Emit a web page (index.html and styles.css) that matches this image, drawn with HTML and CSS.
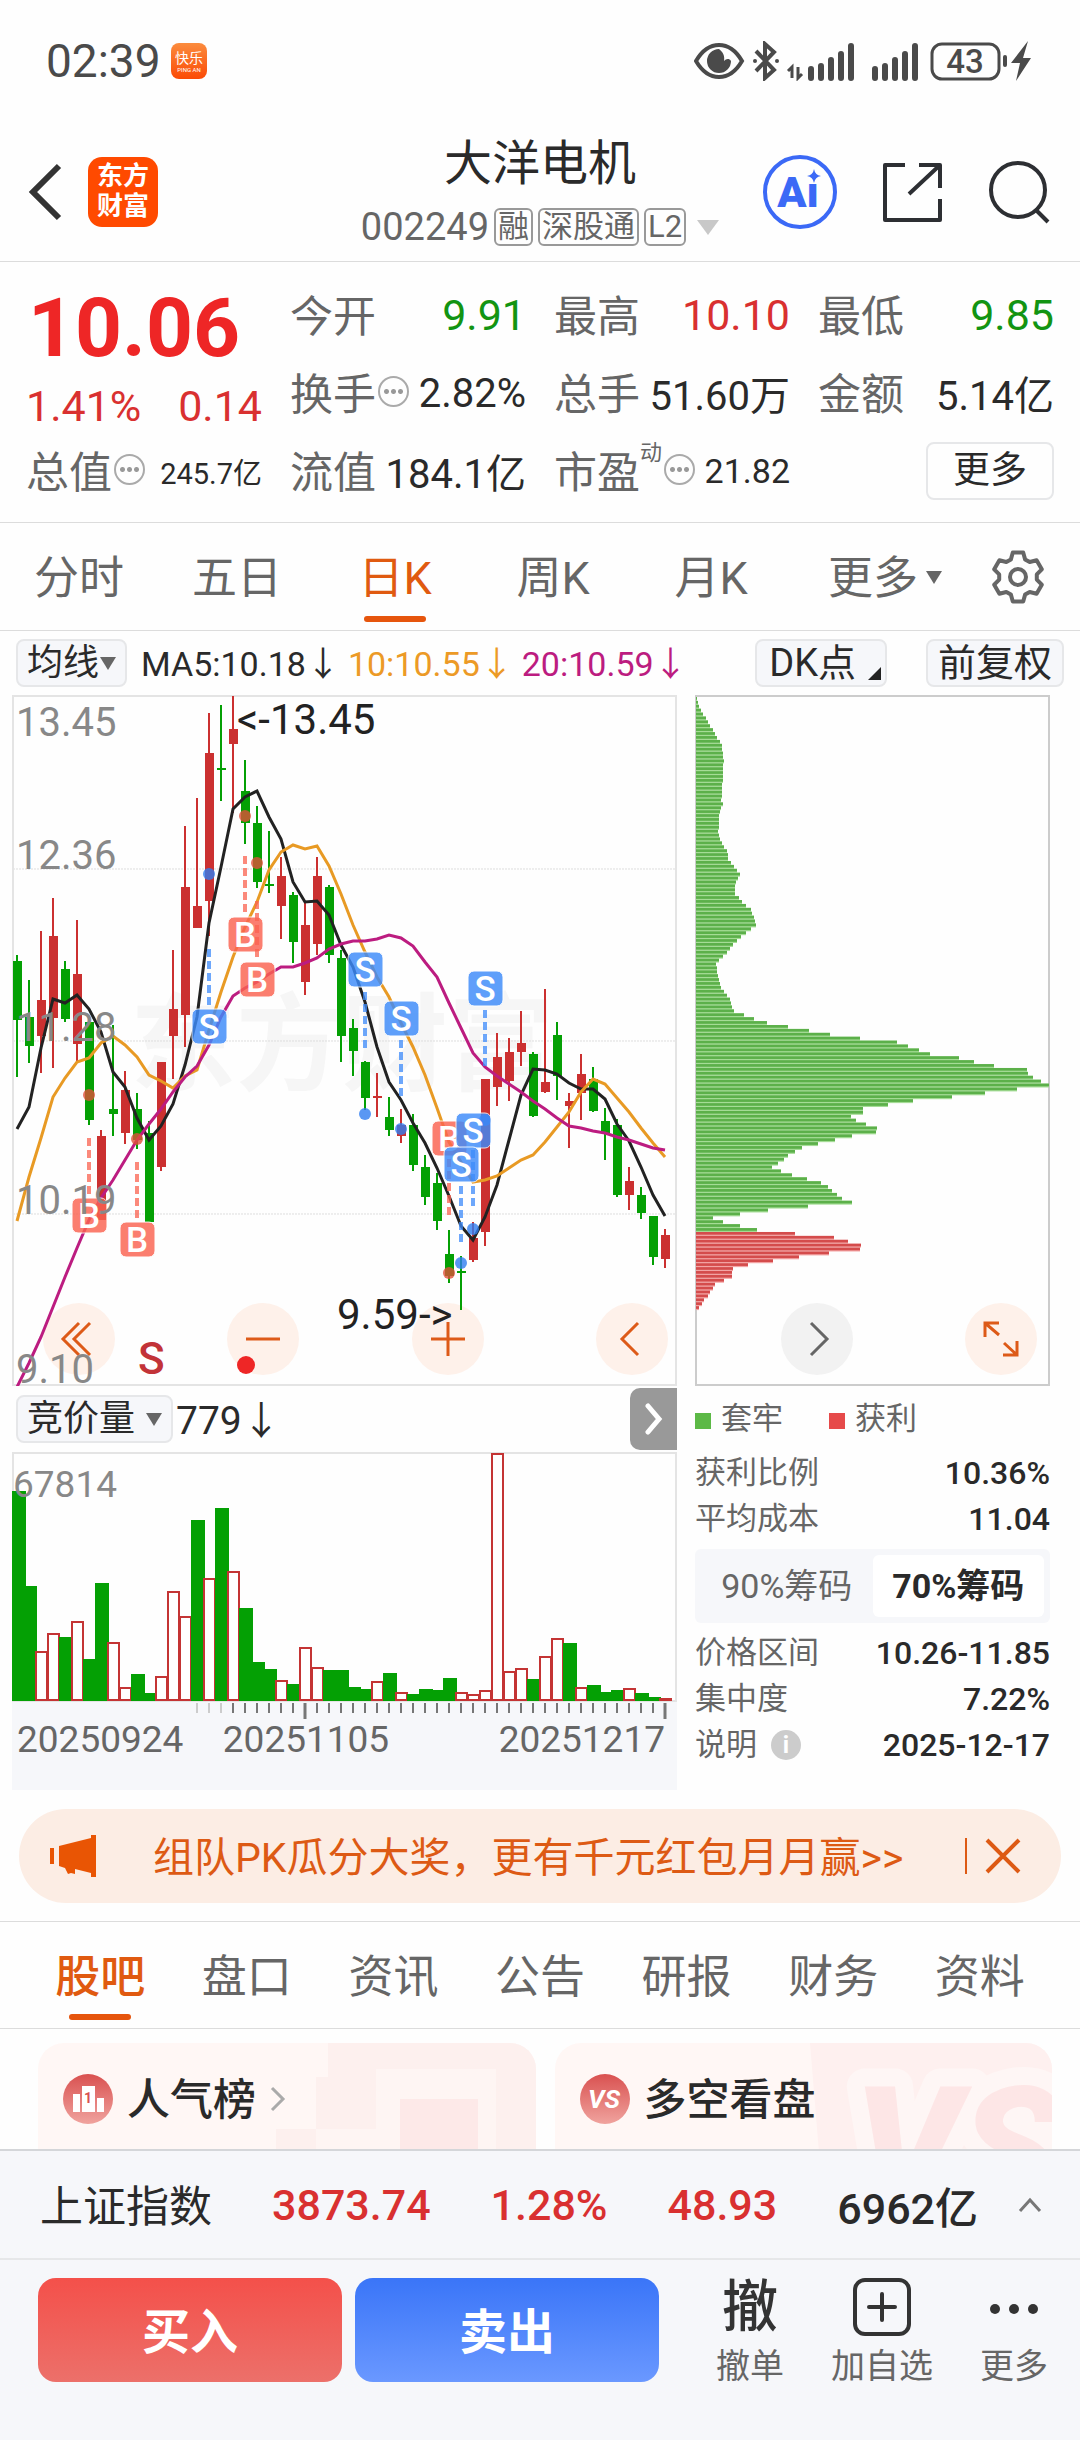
FILE: index.html
```
<!DOCTYPE html>
<html lang="zh-CN">
  <head>
    <meta charset="UTF-8" />
    <meta name="viewport" content="width=device-width, initial-scale=1.0" />
    <title>大洋电机 002249</title>
    <link rel="stylesheet" href="styles.css" />
  </head>

  <body>
    <main class="page">
      <div class="status-bar">
        <span class="clock">02:39</span>
        <svg class="app-badge" width="36" height="36" viewBox="0 0 36 36">
          <defs>
            <linearGradient id="badgeFill" x1="0" y1="0" x2="0" y2="1">
              <stop offset="0" stop-color="#fb8c3e" />
              <stop offset="1" stop-color="#fb4a05" />
            </linearGradient>
          </defs>
          <rect width="36" height="36" rx="8" fill="url(#badgeFill)" />
          <text x="18" y="20" font-size="14" text-anchor="middle" fill="#fff">快乐</text>
          <text x="18" y="29" font-size="6" text-anchor="middle" fill="#fff">PING AN</text>
        </svg>
        <svg class="status-icons" width="340" height="40" viewBox="0 0 340 40">
          <g fill="#4a4a4a">
            <path d="M2 20C9 8 17 4 25 4s16 4 23 16c-7 12-15 16-23 16S9 32 2 20z" fill="none" stroke="#4a4a4a" stroke-width="4" />
            <path d="M25 8a12 12 0 1 0 12 12c-2-3-5-2-7 0 1-5-1-9-5-12z" />
            <path d="M62 10l18 19-9 8V3l9 8-18 19" fill="none" stroke="#4a4a4a" stroke-width="4" />
            <circle cx="61" cy="20" r="2" />
            <circle cx="83" cy="20" r="2" />
            <path d="M98 37V26l-4 4M104 26v11l4-4" fill="none" stroke="#4a4a4a" stroke-width="3" />
            <path d="M117 37V28M127 37V25M137 37V19M147 37V13M157 37V5" stroke="#4a4a4a" stroke-width="6" stroke-linecap="round" />
            <path d="M181 37V28M191 37V25M201 37V19M211 37V13M221 37V5" stroke="#4a4a4a" stroke-width="6" stroke-linecap="round" />
            <rect x="238" y="3" width="67" height="35" rx="10" fill="none" stroke="#4a4a4a" stroke-width="3" />
            <rect x="309" y="14" width="4" height="12" rx="2" />
            <path d="M334 0l-17 22h9l-4 18 15-23h-8z" />
          </g>
          <text x="271" y="32" font-size="33" font-weight="500" text-anchor="middle" fill="#4a4a4a">43</text>
        </svg>
      </div>

      <header class="stock-header">
        <div class="header-left">
          <button class="icon-button" aria-label="返回">
            <svg width="36" height="60" viewBox="0 0 36 60">
              <path d="M31 4L5 30l26 26" fill="none" stroke="#333" stroke-width="6" />
            </svg>
          </button>
          <a class="brand" href="#">东方<br />财富</a>
        </div>
        <div class="stock-title">
          <h1>大洋电机</h1>
          <p class="stock-code">
            002249 <span class="tag">融</span><span class="tag">深股通</span><span class="tag">L2</span>
            <i class="triangle light"></i>
          </p>
        </div>
        <div class="header-right">
          <button class="icon-button" aria-label="AI">
            <svg width="76" height="76" viewBox="0 0 76 76">
              <circle cx="38" cy="38" r="35" fill="none" stroke="#3b69f6" stroke-width="4" />
              <text x="36" y="53" font-size="43" font-weight="900" text-anchor="middle" fill="#3b69f6">Aı</text>
              <path d="M52 15q1 6 7 7-6 1-7 7-1-6-7-7 6-1 7-7z" fill="#3b69f6" />
            </svg>
          </button>
          <button class="icon-button" aria-label="分享">
            <svg width="62" height="62" viewBox="0 0 62 62">
              <path d="M23 4H3v55h55V38M37 4h21v23M58 4L27 33" fill="none" stroke="#2d2f33" stroke-width="4" stroke-linejoin="round" />
            </svg>
          </button>
          <button class="icon-button" aria-label="搜索">
            <svg width="64" height="64" viewBox="0 0 64 64">
              <circle cx="30" cy="30" r="27" fill="none" stroke="#2d2f33" stroke-width="4" />
              <path d="M48 50l12 12" stroke="#2d2f33" stroke-width="4" />
            </svg>
          </button>
        </div>
      </header>

      <section class="quote">
        <div class="price-cell">
          <strong class="price">10.06</strong>
          <div class="change up"><span>1.41%</span><span>0.14</span></div>
        </div>
        <div class="cell"><span>今开</span><b class="down">9.91</b></div>
        <div class="cell"><span>最高</span><b class="up">10.10</b></div>
        <div class="cell"><span>最低</span><b class="down">9.85</b></div>
        <div class="cell"><span>换手<i class="hint"></i></span><b class="mid">2.82%</b></div>
        <div class="cell"><span>总手</span><b class="mid">51.60万</b></div>
        <div class="cell"><span>金额</span><b class="mid">5.14亿</b></div>
        <div class="cell"><span>总值<i class="hint"></i></span><b class="small">245.7亿</b></div>
        <div class="cell"><span>流值</span><b class="mid">184.1亿</b></div>
        <div class="cell"><span>市盈<sup>动</sup><i class="hint"></i></span><b class="medium">21.82</b></div>
        <div class="cell end"><button class="more-button">更多</button></div>
      </section>

      <nav class="tabs period-tabs">
        <button>分时</button>
        <button>五日</button>
        <button class="active">日K</button>
        <button>周K</button>
        <button>月K</button>
        <button class="wide">更多<i class="triangle tiny"></i></button>
        <button class="gear" aria-label="设置">
          <svg width="54" height="54" viewBox="-27 -27 54 54">
            <g fill="none" stroke="#666" stroke-width="4" stroke-linejoin="round">
              <path d="M-7.1-17.6L-5.2-24.5H5.2L7.1-17.6 11.7-15 18.6-16.7 23.8-7.7 18.8-2.6V2.6L23.8 7.7 18.6 16.7 11.7 15 7.1 17.6 5.2 24.5H-5.2L-7.1 17.6-11.7 15-18.6 16.7-23.8 7.7-18.8 2.6V-2.6L-23.8-7.7-18.6-16.7-11.7-15z" />
              <circle r="8" />
            </g>
          </svg>
        </button>
      </nav>

      <div class="toolbar">
        <label class="chip">
          <select aria-label="指标"><option>均线</option></select>
          <i class="triangle"></i>
        </label>
        <span class="ma ma5">MA5:10.18↓</span>
        <span class="ma ma10">10:10.55↓</span>
        <span class="ma ma20">20:10.59↓</span>
        <button class="chip dk">DK点</button>
        <button class="chip adjust">前复权</button>
      </div>

      <section class="charts">
        <div class="chart-column">
          <div class="kline">
            <div class="chart-tools">
              <button class="round" aria-label="最早">
                <svg width="40" height="40" viewBox="0 0 40 40"><path d="M20 4L4 20l16 16M31 4L15 20l16 16" /></svg>
              </button>
              <button class="round" aria-label="缩小">
                <svg width="40" height="40" viewBox="0 0 40 40"><path d="M3 20h34" /></svg>
              </button>
              <button class="round" aria-label="放大">
                <svg width="40" height="40" viewBox="0 0 40 40"><path d="M3 20h34M20 3v34" /></svg>
              </button>
              <button class="round" aria-label="向左">
                <svg width="40" height="40" viewBox="0 0 40 40"><path d="M26 4L10 20l16 16" /></svg>
              </button>
            </div>
            <svg id="kline" class="plot" viewBox="0 0 665 691"></svg>
          </div>
          <div class="sub-toolbar">
            <label class="chip">
              <select aria-label="副图指标"><option>竞价量</option></select>
              <i class="triangle"></i>
            </label>
            <span class="volume-value">779↓</span>
            <button class="next" aria-label="展开">
              <svg width="20" height="32" viewBox="0 0 20 32"><path d="M4 3l11 13L4 29" /></svg>
            </button>
          </div>
          <svg id="volume" class="plot" viewBox="0 0 665 250"></svg>
          <div class="axis">
            <svg id="ticks" class="plot" viewBox="0 0 665 18"></svg>
            <div class="dates"><span>20250924</span><span>20251105</span><span>20251217</span></div>
          </div>
        </div>

        <div class="chips-column">
          <div class="profile">
            <svg id="profile" class="plot" viewBox="0 0 355 691"></svg>
            <div class="profile-tools">
              <button class="round gray" aria-label="向右">
                <svg width="40" height="40" viewBox="0 0 40 40"><path d="M14 4l16 16-16 16" /></svg>
              </button>
              <button class="round" aria-label="全屏">
                <svg width="40" height="40" viewBox="0 0 40 40"><path d="M18 4H4v14M4 4l14 12M22 36h14V22M36 36L23 24" /></svg>
              </button>
            </div>
          </div>
          <div class="legend"><span class="trapped">套牢</span><span class="profit">获利</span></div>
          <dl class="facts">
            <div><dt>获利比例</dt><dd>10.36%</dd></div>
            <div><dt>平均成本</dt><dd>11.04</dd></div>
          </dl>
          <div class="toggle">
            <button>90%筹码</button>
            <button class="active">70%筹码</button>
          </div>
          <dl class="facts">
            <div><dt>价格区间</dt><dd>10.26-11.85</dd></div>
            <div><dt>集中度</dt><dd>7.22%</dd></div>
            <div><dt>说明<i class="info">i</i></dt><dd>2025-12-17</dd></div>
          </dl>
        </div>
      </section>

      <div class="banner">
        <svg width="50" height="44" viewBox="0 0 50 44">
          <path d="M1 14h4v16H1zM10 12L42 4V1h5v42h-5v-4l-16-4v5l-4-1-3 1-3-6-6-2z" fill="#e95504" />
        </svg>
        <a href="#">组队PK瓜分大奖，更有千元红包月月赢&gt;&gt;</a>
        <button class="close" aria-label="关闭">
          <svg width="36" height="36" viewBox="0 0 36 36"><path d="M2 2l32 32M34 2L2 34" /></svg>
        </button>
      </div>

      <nav class="tabs info-tabs">
        <button class="active">股吧</button>
        <button>盘口</button>
        <button>资讯</button>
        <button>公告</button>
        <button>研报</button>
        <button>财务</button>
        <button>资料</button>
      </nav>

      <section class="cards">
        <a class="card" href="#">
          <svg class="card-art" width="260" height="170" viewBox="0 0 260 170">
            <path d="M52 0h208v170H0V86h40V34h12z" fill="#fdf0ee" />
            <path d="M100 26h120v144H40V86h60z" fill="#fef5f3" />
            <path d="M124 56h78v114h-78z" fill="#fde9e8" />
          </svg>
          <svg width="50" height="50" viewBox="0 0 50 50">
            <defs>
              <linearGradient id="redFill" x1="0" y1="0" x2="0" y2="1">
                <stop offset="0" stop-color="#d95150" />
                <stop offset="1" stop-color="#f0a39e" />
              </linearGradient>
            </defs>
            <circle cx="25" cy="25" r="25" fill="url(#redFill)" />
            <path d="M10 20h7v18h-7zM19 12h13v26H19zM34 24h7v14h-7z" fill="#fff" />
            <text x="25" y="29" font-size="14" font-weight="700" text-anchor="middle" fill="#d95150">1</text>
          </svg>
          <span>人气榜</span>
          <svg width="16" height="26" viewBox="0 0 16 26"><path d="M2 2l11 11L2 24" fill="none" stroke="#aaa" stroke-width="3" /></svg>
        </a>
        <a class="card" href="#">
          <svg class="card-art" width="242" height="170" viewBox="0 0 242 170">
            <path d="M0 0h242v170H14z" fill="#fef0ef" />
            <text x="44" y="162" font-size="166" font-weight="900" font-style="italic" fill="#fde6e6" stroke="#fef6f5" stroke-width="36" stroke-linejoin="round" paint-order="stroke">VS</text>
          </svg>
          <svg width="50" height="50" viewBox="0 0 50 50">
            <circle cx="25" cy="25" r="25" fill="url(#redFill)" />
            <text x="24" y="34" font-size="26" font-weight="700" font-style="italic" text-anchor="middle" fill="#fff">VS</text>
          </svg>
          <span>多空看盘</span>
        </a>
      </section>
    </main>

    <footer class="bottom">
      <div class="index-row">
        <span>上证指数</span>
        <b class="up">3873.74</b>
        <b class="up">1.28%</b>
        <b class="up">48.93</b>
        <b>6962亿</b>
        <button class="icon-button caret" aria-label="展开指数">
          <svg width="24" height="16" viewBox="0 0 24 16"><path d="M2 14L12 3l10 11" fill="none" stroke="#777" stroke-width="3" /></svg>
        </button>
      </div>
      <div class="actions">
        <button class="trade buy">买入</button>
        <button class="trade sell">卖出</button>
        <button class="action"><span class="glyph">撤</span>撤单</button>
        <button class="action">
          <svg width="58" height="58" viewBox="0 0 58 58">
            <rect x="2" y="2" width="54" height="54" rx="10" fill="none" stroke="#333" stroke-width="4" />
            <path d="M29 16v26M16 29h26" stroke="#333" stroke-width="4" stroke-linecap="round" />
          </svg>
          加自选
        </button>
        <button class="action">
          <svg width="58" height="58" viewBox="0 0 58 58">
            <g fill="#333"><circle cx="10" cy="31" r="5" /><circle cx="29" cy="31" r="5" /><circle cx="48" cy="31" r="5" /></g>
          </svg>
          更多
        </button>
      </div>
    </footer>

    <script src="chart.js"></script>
  </body>
</html>
```

FILE: styles.css
```
* {
  box-sizing: border-box;
}

html,
body {
  margin: 0;
  padding: 0;
}

body {
  display: flex;
  flex-direction: column;
  height: 100vh;
  background: #fefefe;
  color: #2a2a2a;
  font-family: Roboto, "Noto Sans CJK SC", sans-serif;
}

h1,
p,
dl,
dd {
  margin: 0;
}

button,
select {
  margin: 0;
  padding: 0;
  border: 0;
  background: none;
  color: inherit;
  font: inherit;
}

a {
  color: inherit;
  text-decoration: none;
}

svg {
  display: block;
  flex: none;
}

i {
  font-style: normal;
}

.page {
  flex: 1;
  min-height: 0;
  overflow: hidden;
}

.up {
  color: #d93030;
}

.down {
  color: #129412;
}

.triangle {
  display: inline-block;
  border: 8px solid transparent;
  border-top: 13px solid #666;
  border-bottom: 0;
}

.triangle.light {
  border-width: 15px 11px 0;
  border-top-color: #c8c8c8;
  margin-left: 6px;
}

.triangle.tiny {
  margin-left: 8px;
  margin-bottom: 10px;
}

/* status bar */
.status-bar {
  display: flex;
  align-items: center;
  height: 122px;
  padding: 0 46px;
}

.clock {
  font-size: 46px;
  color: #4a4a4a;
}

.app-badge {
  margin-left: 10px;
}

.status-icons {
  margin-left: auto;
}

/* header */
.stock-header {
  display: grid;
  grid-template-columns: 1fr auto 1fr;
  align-items: center;
  padding: 0 28px;
  border-bottom: 1px solid #dcdcdc;
}

.header-left,
.header-right {
  display: flex;
  align-items: center;
}

.header-left {
  gap: 24px;
}

.header-right {
  justify-content: flex-end;
  gap: 44px;
}

.brand {
  width: 70px;
  height: 70px;
  padding-top: 4px;
  border-radius: 14px;
  background: #ff4a00;
  color: #fff;
  font-size: 26px;
  font-weight: 700;
  line-height: 30px;
  text-align: center;
}

.stock-title {
  padding: 11px 0 2px;
  text-align: center;
}

.stock-title h1 {
  font-size: 48px;
  font-weight: 400;
  line-height: 62px;
}

.stock-code {
  display: flex;
  align-items: center;
  gap: 5px;
  height: 64px;
  color: #666;
  font-size: 38px;
}

.tag {
  padding: 0 2px;
  border: 2px solid #999;
  border-radius: 6px;
  font-size: 31px;
  line-height: 34px;
}

/* quote */
.quote {
  display: grid;
  grid-template-columns: repeat(4, 1fr);
  grid-auto-rows: 78px;
  column-gap: 28px;
  padding: 14px 26px 12px;
  border-bottom: 1px solid #dcdcdc;
}

.price-cell {
  grid-row: span 2;
}

.price {
  display: block;
  padding-left: 2px;
  color: #ee2626;
  font-size: 82px;
  line-height: 104px;
}

.change {
  display: flex;
  justify-content: space-between;
  font-size: 43px;
  line-height: 52px;
}

.cell {
  display: flex;
  align-items: center;
  justify-content: space-between;
  white-space: nowrap;
}

.cell.end {
  justify-content: flex-end;
}

.cell span {
  display: flex;
  align-items: center;
  padding-bottom: 4px;
  color: #666;
  font-size: 43px;
}

.cell b {
  font-size: 43px;
  font-weight: 400;
}

.cell b.mid {
  font-size: 40px;
}

.cell b.medium {
  font-size: 34px;
}

.cell b.small {
  font-size: 29px;
}

.cell sup {
  align-self: flex-start;
  font-size: 22px;
  line-height: 30px;
}

.hint {
  width: 31px;
  height: 31px;
  margin-left: 2px;
  padding: 0 3px;
  border: 2px solid #aaa;
  border-radius: 50%;
  background: radial-gradient(circle, #999 2px, transparent 3px) center / 7px 7px content-box repeat-x;
}

.more-button {
  width: 128px;
  height: 58px;
  border: 2px solid #e6e7e9;
  border-radius: 8px;
  font-size: 37px;
  line-height: 50px;
}

/* tabs */
.tabs {
  display: flex;
  height: 108px;
  border-bottom: 1px solid #dcdcdc;
  color: #666;
  font-size: 45px;
}

.tabs button {
  position: relative;
  flex: 1;
  padding-bottom: 4px;
}

.tabs .active {
  color: #e05a10;
}

.tabs .active::after {
  content: "";
  position: absolute;
  bottom: 8px;
  left: 50%;
  width: 62px;
  height: 6px;
  margin-left: -31px;
  border-radius: 3px;
  background: #e6550d;
}

.period-tabs {
  padding-right: 24px;
}

.period-tabs button {
  flex: 158;
}

.period-tabs .wide {
  flex: 190;
}

.period-tabs .gear {
  flex: 76;
  display: flex;
  align-items: center;
  justify-content: center;
  padding-bottom: 0;
}

.info-tabs {
  padding: 0 27px;
  border-top: 1px solid #dcdcdc;
}

.info-tabs .active {
  font-weight: 500;
}

/* chart toolbars */
.toolbar {
  display: flex;
  align-items: center;
  height: 64px;
  padding: 0 16px;
  font-size: 34px;
}

.chip {
  display: flex;
  align-items: center;
  height: 48px;
  padding: 0 9px;
  border: 2px solid #e6e7e9;
  border-radius: 8px;
  background: #f6f7fa;
  font-size: 36px;
  line-height: 44px;
}

.chip select {
  appearance: none;
}

.sub-toolbar .chip .triangle {
  margin-left: 10px;
}

.ma {
  padding-bottom: 4px;
  white-space: nowrap;
}

.ma5 {
  margin-left: 14px;
}

.ma10 {
  margin-left: 8px;
  color: #ec9a26;
}

.ma20 {
  margin-left: 8px;
  color: #bc1c80;
}

.dk {
  position: relative;
  margin-left: auto;
  padding: 0 29px 0 12px;
  font-size: 38px;
}

.dk::after {
  content: "";
  position: absolute;
  right: 4px;
  bottom: 5px;
  border-left: 13px solid transparent;
  border-bottom: 13px solid #222;
}

.adjust {
  margin-left: 39px;
  padding: 0 10px;
  font-size: 38px;
}

/* charts */
.charts {
  display: grid;
  grid-template-columns: 665fr 355fr;
  column-gap: 18px;
  padding: 0 30px 0 12px;
}

.plot {
  width: 100%;
}

.kline,
.profile {
  position: relative;
}

/* the labels of the chart stay above the round buttons */
#kline {
  position: relative;
  pointer-events: none;
}

.chart-tools,
.profile-tools {
  position: absolute;
  bottom: 11px;
  display: flex;
  justify-content: space-between;
}

.chart-tools {
  left: 31px;
  right: 9px;
}

.profile-tools {
  left: 86px;
  right: 13px;
}

.round {
  display: flex;
  align-items: center;
  justify-content: center;
  width: 72px;
  height: 72px;
  border-radius: 50%;
  background: #fef1ea;
}

.round.gray {
  background: #f2f2f2;
}

.round path {
  fill: none;
  stroke: #dd5a18;
  stroke-width: 3;
}

.round.gray path {
  stroke: #666;
}

.sub-toolbar {
  display: flex;
  align-items: center;
  height: 66px;
  padding-left: 4px;
}

.volume-value {
  margin-left: 3px;
  padding-bottom: 4px;
  font-size: 39px;
}

.next {
  display: flex;
  align-items: center;
  justify-content: center;
  width: 47px;
  height: 62px;
  margin-left: auto;
  border-radius: 10px 0 0 10px;
  background: #999;
}

.next path {
  fill: none;
  stroke: #fff;
  stroke-width: 5;
  stroke-linecap: round;
}

.axis {
  height: 88px;
  background: #f6f7fa;
}

.dates {
  display: flex;
  justify-content: space-between;
  padding: 0 12px 0 5px;
  color: #666;
  font-size: 37px;
  line-height: 40px;
}

/* lines up with the tick of its day */
.dates span:nth-child(2) {
  margin-right: 70px;
}

.legend {
  display: flex;
  gap: 46px;
  height: 64px;
  padding-top: 2px;
  color: #666;
  font-size: 31px;
  line-height: 62px;
}

.legend span::before {
  content: "";
  display: inline-block;
  width: 16px;
  height: 16px;
  margin-right: 10px;
}

.trapped::before {
  background: #5cb946;
}

.profit::before {
  background: #e64a4a;
}

.facts {
  font-size: 31px;
  line-height: 46px;
}

.facts div {
  display: flex;
  justify-content: space-between;
}

.facts dt {
  display: flex;
  align-items: center;
  color: #666;
}

.facts dd {
  font-size: 32px;
  font-weight: 500;
}

.info {
  width: 30px;
  height: 30px;
  margin-left: 14px;
  border-radius: 50%;
  background: #ccc;
  color: #fff;
  font-size: 24px;
  font-weight: 700;
  line-height: 30px;
  text-align: center;
}

.toggle {
  display: flex;
  margin: 7px 0;
  padding: 6px;
  border-radius: 6px;
  background: #f6f7fa;
  color: #666;
  font-size: 34px;
}

.toggle button {
  flex: 1;
  height: 62px;
  padding-bottom: 6px;
  border-radius: 6px;
}

.toggle .active {
  background: #fff;
  color: #2a2a2a;
  font-weight: 700;
}

/* banner */
.banner {
  display: flex;
  align-items: center;
  height: 94px;
  margin: 19px 19px 18px;
  padding: 0 40px 0 30px;
  border-radius: 47px;
  background: #fcede4;
  color: #dd5a14;
  font-size: 41px;
}

.banner a {
  margin-left: 54px;
  padding-bottom: 4px;
}

.close {
  margin-left: auto;
  padding-left: 18px;
  border-left: 2px solid #dd5a14;
}

.close path {
  stroke: #dd5a14;
  stroke-width: 4;
}

/* cards */
.cards {
  display: grid;
  grid-template-columns: 1fr 1fr;
  gap: 19px;
  padding: 14px 28px 0 38px;
}

.card {
  position: relative;
  display: flex;
  align-items: center;
  gap: 14px;
  height: 170px;
  padding: 0 25px 58px;
  overflow: hidden;
  border-radius: 26px;
  background: #fff7f5;
  font-size: 43px;
  font-weight: 500;
}

.card > * {
  position: relative;
}

.card span {
  padding-bottom: 6px;
}

.card .card-art {
  position: absolute;
  top: 0;
  right: 0;
}

/* bottom bar */
.bottom {
  border-top: 2px solid #d4d6d9;
  background: #f6f7fa;
}

.index-row {
  display: flex;
  align-items: center;
  gap: 40px;
  height: 109px;
  padding: 0 38px 0 40px;
  border-bottom: 2px solid #e6e7e9;
  font-size: 43px;
  white-space: nowrap;
}

.index-row span {
  padding-bottom: 4px;
}

.index-row b {
  margin-left: 20px;
  font-weight: 500;
}

.caret {
  margin-left: auto;
}

.actions {
  display: flex;
  align-items: flex-start;
  padding: 18px 0 54px 38px;
}

.trade {
  flex: 304;
  height: 104px;
  margin-right: 13px;
  padding-bottom: 4px;
  border-radius: 18px;
  color: #fff;
  font-size: 48px;
  font-weight: 700;
}

.buy {
  background: linear-gradient(#f4504a, #ec706a);
}

.sell {
  margin-right: 25px;
  background: linear-gradient(#3a75f8, #6a98ff);
}

.action {
  display: flex;
  flex: 132;
  flex-direction: column;
  align-items: center;
  gap: 10px;
  color: #666;
  font-size: 34px;
  line-height: 40px;
}

.glyph {
  color: #333;
  font-size: 56px;
  font-weight: 500;
  line-height: 58px;
}
```

FILE: chart.js
```
const RED = "#cb3030";
const GREEN = "#04a004";
const STEP = 12;
const FIRST = 5;

// direction, high, body top, body bottom, low
const candles = [
  ["g", 259, 265, 324, 381], ["g", 284, 321, 350, 367], ["r", 235, 304, 340, 377],
  ["r", 202, 240, 322, 372], ["g", 265, 273, 323, 326], ["r", 224, 278, 348, 365],
  ["g", 326, 326, 424, 429], ["r", 434, 440, 524, 524], ["g", 329, 413, 418, 440],
  ["r", 375, 394, 437, 448], ["g", 397, 413, 444, 453], ["g", 425, 437, 526, 526],
  ["r", 366, 366, 471, 475], ["r", 254, 313, 340, 383], ["r", 130, 191, 319, 351],
  ["r", 102, 210, 232, 232], ["r", 17, 57, 205, 240], ["g", 9, 72, 74, 105],
  ["r", 0, 33, 48, 117], ["g", 64, 95, 127, 148], ["g", 110, 127, 186, 192],
  ["g", 135, 188, 190, 197], ["r", 161, 180, 210, 243], ["g", 196, 199, 246, 267],
  ["r", 206, 229, 286, 299], ["r", 161, 180, 248, 259], ["g", 189, 191, 259, 267],
  ["g", 254, 262, 340, 366], ["g", 323, 332, 355, 380], ["g", 365, 366, 402, 414],
  ["r", 377, 400, 402, 421], ["g", 401, 421, 434, 440], ["r", 413, 429, 440, 447],
  ["g", 418, 429, 469, 475], ["g", 459, 471, 501, 509], ["g", 477, 487, 525, 534],
  ["g", 534, 558, 580, 587], ["g", 560, 575, 577, 614], ["r", 526, 542, 564, 566],
  ["r", 383, 383, 536, 550], ["r", 337, 361, 391, 410], ["r", 342, 356, 385, 405],
  ["r", 315, 347, 356, 370], ["g", 356, 358, 420, 421], ["r", 293, 386, 396, 397],
  ["g", 326, 339, 380, 404], ["r", 397, 405, 410, 452], ["r", 358, 378, 397, 424],
  ["g", 371, 383, 415, 416], ["g", 412, 425, 437, 464], ["g", 423, 429, 499, 501],
  ["r", 471, 485, 499, 514], ["g", 491, 499, 517, 523], ["g", 520, 520, 561, 569],
  ["r", 533, 539, 563, 572],
];

const ma5 = [
  433, 411, 352, 303, 307, 299, 313, 336, 376, 391, 422, 444, 430, 408, 369, 321, 227, 171, 113,
  101, 95, 121, 143, 186, 206, 205, 219, 249, 271, 306, 351, 386, 404, 427, 447, 472, 500, 530,
  544, 521, 489, 444, 399, 373, 374, 378, 387, 393, 393, 403, 428, 445, 471, 499, 520,
];
const ma10 = [
  525, 481, 442, 401, 382, 366, 362, 347, 340, 349, 361, 379, 385, 392, 380, 374, 334, 296, 261,
  231, 206, 174, 156, 149, 153, 150, 170, 198, 229, 256, 281, 301, 327, 351, 379, 412, 446, 466,
  486, 484, 480, 472, 464, 459, 446, 431, 416, 396, 383, 388, 402, 416, 432, 447, 461,
];
const ma20 = [
  691, 667, 641, 611, 581, 552, 524, 502, 484, 464, 444, 428, 413, 396, 381, 370, 349, 321, 300,
  292, 286, 278, 271, 271, 267, 262, 253, 248, 245, 245, 243, 239, 242, 250, 266, 281, 307, 332,
  357, 371, 380, 388, 396, 405, 413, 422, 430, 432, 435, 437, 441, 444, 448, 452, 454,
];

// type, day, box top, dot, dash from, dash to
const trades = [
  ["B", 6, 502, 399, 442, 499], ["B", 10, 526, 443, 466, 522], ["S", 16, 313, 178, 253, 309],
  ["B", 19, 221, 120, 160, 217], ["B", 20, 266, 167, 205, 264], ["S", 29, 256, 418, 296, 352],
  ["S", 32, 305, 433, 344, 400], ["S", 39, 275, 424, 314, 371], ["B", 36, 425, 577, 463, 521],
  ["S", 38, 417, 533, 454, 513], ["S", 37, 451, 567, 490, 546],
];

const volumes = [
  ["g", 210], ["g", 115], ["r", 50], ["r", 68], ["g", 64], ["r", 80], ["g", 42], ["g", 118],
  ["r", 59], ["r", 14], ["g", 27], ["g", 8], ["r", 25], ["r", 110], ["r", 85], ["g", 181],
  ["r", 123], ["g", 193], ["r", 130], ["g", 93], ["g", 39], ["g", 32], ["r", 21], ["g", 17],
  ["r", 54], ["r", 34], ["g", 31], ["g", 31], ["g", 14], ["g", 12], ["r", 20], ["g", 28],
  ["r", 9], ["g", 7], ["g", 12], ["g", 11], ["g", 23], ["r", 9], ["r", 7], ["r", 11],
  ["r", 248], ["r", 30], ["r", 33], ["g", 22], ["r", 45], ["r", 63], ["g", 58], ["r", 14],
  ["g", 16], ["g", 9], ["g", 11], ["r", 13], ["g", 8], ["g", 4], ["r", 3],
];

const chipBars = [
  1, 2, 3, 5, 7, 10, 12, 14, 17, 19, 21, 24, 26, 26, 27, 27, 28, 27, 27, 27, 27, 27, 26, 26, 26,
  26, 25, 27, 25, 24, 23, 23, 23, 23, 22, 23, 24, 26, 28, 31, 32, 32, 35, 38, 41, 44, 42, 40, 39,
  39, 39, 43, 46, 50, 55, 56, 58, 59, 60, 55, 50, 45, 41, 37, 34, 31, 27, 23, 20, 21, 21, 22, 23,
  24, 25, 28, 31, 34, 35, 36, 38, 48, 58, 71, 92, 113, 134, 164, 201, 212, 223, 234, 263, 278,
  298, 331, 332, 337, 345, 353, 321, 289, 256, 217, 192, 167, 167, 155, 160, 170, 181, 180, 156,
  139, 122, 106, 99, 92, 88, 82, 76, 85, 96, 111, 125, 132, 136, 141, 146, 156, 112, 72, 44, 17,
  27, 44, 61,
];
const profitBars = [
  99, 138, 152, 165, 164, 133, 103, 77, 52, 37, 36, 36, 28, 19, 17, 14, 12, 8, 6, 3,
];

function add(parent, name, attrs, text) {
  const node = document.createElementNS("http://www.w3.org/2000/svg", name);
  for (const key in attrs) {
    node.setAttribute(key, attrs[key]);
  }
  if (text) {
    node.textContent = text;
  }
  parent.appendChild(node);
  return node;
}

function dayX(i) {
  return FIRST + i * STEP;
}

function drawAverage(svg, values, color) {
  const points = values.map((y, i) => dayX(i) + "," + (y + 1)).join(" ");
  add(svg, "polyline", { points, fill: "none", stroke: color, "stroke-width": 3 });
}

function drawKline() {
  const svg = document.getElementById("kline");
  add(svg, "text", { x: 118, y: 387, "font-size": 106, "font-weight": 700, fill: "#f6f6f6" }, "东方财富");
  for (const y of [174, 346, 519]) {
    add(svg, "line", { x1: 1, x2: 664, y1: y, y2: y, stroke: "#ddd", "stroke-dasharray": "2 1" });
  }
  add(svg, "rect", { x: 1, y: 1, width: 663, height: 689, fill: "none", stroke: "#e4e4e4", "stroke-width": 2 });

  candles.forEach(([dir, high, top, bottom, low], i) => {
    const color = dir === "r" ? RED : GREEN;
    add(svg, "rect", { x: dayX(i) - 1, y: high + 1, width: 2, height: low - high, fill: color });
    add(svg, "rect", { x: dayX(i) - 4, y: top + 1, width: 9, height: bottom - top, fill: color });
  });

  drawAverage(svg, ma5, "#222");
  drawAverage(svg, ma10, "#e89a24");
  drawAverage(svg, ma20, "#bc1c80");

  for (const [type, day, top, dot, from, to] of trades) {
    const x = dayX(day);
    const color = type === "B" ? "#fb6350" : "#3d8bfa";
    add(svg, "line", {
      x1: x, x2: x, y1: from + 1, y2: to + 1, stroke: color, "stroke-width": 4, "stroke-dasharray": "8 4", opacity: 0.75,
    });
    add(svg, "circle", { cx: x, cy: dot + 1, r: 6, fill: type === "B" ? "#e0503a" : "#2f7df0", opacity: 0.8 });
    add(svg, "rect", {
      x: x - 17, y: top + 1, width: 35, height: 35, rx: 6, fill: color, stroke: "#fff", "stroke-width": 1, opacity: 0.82,
    });
    add(svg, "text", {
      x: x, y: top + 31, "font-size": 35, "font-weight": 500, "text-anchor": "middle", fill: "#fff",
    }, type);
  }

  const labels = [["13.45", 41], ["12.36", 174], ["11.28", 346], ["10.19", 519], ["9.10", 688]];
  for (const [value, y] of labels) {
    add(svg, "text", { x: 4, y, "font-size": 40, fill: "#888" }, value);
  }
  add(svg, "text", { x: 225, y: 39, "font-size": 42, fill: "#222" }, "<-13.45");
  add(svg, "text", { x: 325, y: 634, "font-size": 42, fill: "#222" }, "9.59->");
  add(svg, "text", { x: 126, y: 679, "font-size": 44, "font-weight": 500, fill: "#c23338" }, "S");
  add(svg, "circle", { cx: 234, cy: 670, r: 9, fill: "#ee2626" });
}

function drawVolume() {
  const svg = document.getElementById("volume");
  add(svg, "rect", { x: 1, y: 1, width: 663, height: 248, fill: "none", stroke: "#e4e4e4", "stroke-width": 2 });
  volumes.forEach(([dir, height], i) => {
    const x = dayX(i) - 6;
    if (dir === "g") {
      add(svg, "rect", { x: Math.max(x, 0), y: 249 - height, width: 14, height, fill: GREEN });
    } else {
      add(svg, "rect", {
        x: x + 1, y: 250 - height, width: 11, height: height - 2, fill: "#fff", stroke: "#c43434", "stroke-width": 2,
      });
    }
  });
  add(svg, "text", { x: 1, y: 45, "font-size": 37, fill: "#888" }, "67814");

  const ticks = document.getElementById("ticks");
  for (let i = 15; i < 55; i++) {
    const long = i === 24 || i === 54;
    add(ticks, "line", {
      x1: dayX(i), x2: dayX(i), y1: 1, y2: long ? 17 : 11,
      stroke: i < 18 ? "#ccc" : "#777", "stroke-width": long ? 3 : 2,
    });
  }
}

function drawProfile() {
  const svg = document.getElementById("profile");
  add(svg, "rect", { x: 1, y: 1, width: 353, height: 689, fill: "none", stroke: "#ccc", "stroke-width": 2 });
  chipBars.concat(profitBars).forEach((length, i) => {
    const green = i < chipBars.length;
    const y = 2 + i * 3.905;
    add(svg, "rect", { x: 1, y, width: length, height: 3.905, fill: green ? "#a5dc96" : "#f3a5a5" });
    add(svg, "rect", { x: 1, y, width: length, height: 2.7, fill: green ? "#5cb04a" : "#d44c4c" });
  });
}

drawKline();
drawVolume();
drawProfile();
```
